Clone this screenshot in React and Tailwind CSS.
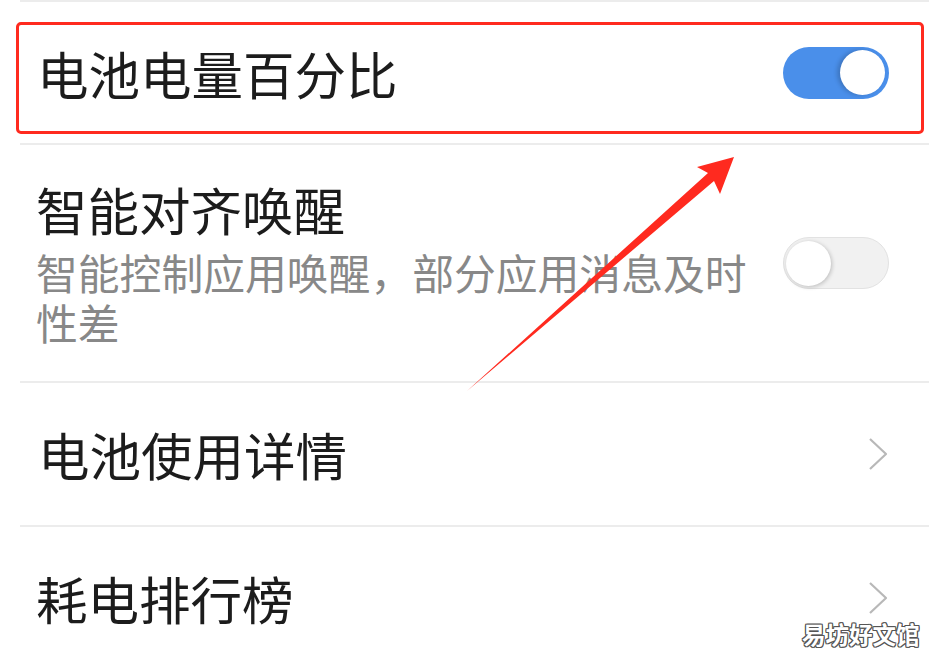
import React from 'react'

function Divider() {
  return <div className="mx-5 h-[2px] bg-[#ececec]" />
}

function Toggle({ on }) {
  if (on) {
    return (
      <div className="flex h-[52px] w-[106px] items-center justify-end rounded-full bg-[#4a8fea] pr-[4px]">
        <div className="h-[45px] w-[45px] rounded-full bg-white shadow-[-3px_0_4px_rgba(0,0,0,0.18)]" />
      </div>
    )
  }
  return (
    <div className="flex h-[52px] w-[106px] items-center justify-start rounded-full border border-[#e2e2e2] bg-[#f1f1f1] pl-[2px]">
      <div className="h-[45px] w-[45px] rounded-full bg-white shadow-[1px_1px_4px_rgba(0,0,0,0.22)]" />
    </div>
  )
}

function Chevron() {
  return (
    <svg width="20" height="34" viewBox="0 0 20 34" fill="none">
      <polyline points="2,2 18,17 2,32" stroke="#b8b8b8" strokeWidth="2.2" strokeLinejoin="round" />
    </svg>
  )
}

export default function App() {
  return (
    <div className="relative h-[668px] w-[949px] overflow-hidden bg-white font-['Noto_Sans_CJK_SC',sans-serif]">
      <Divider />

      <div className="flex h-[141px] items-center justify-between pl-[37px] pr-[60px]">
        <span className="text-[51.5px] leading-[60px] text-[#1c1c1c]">电池电量百分比</span>
        <Toggle on />
      </div>
      <Divider />

      <div className="flex h-[236px] items-center justify-between pl-[36px] pr-[60px]">
        <div className="flex w-[725px] flex-col gap-[8px]">
          <span className="text-[51.5px] leading-[60px] text-[#1c1c1c]">智能对齐唤醒</span>
          <span className="text-[41.8px] leading-[50px] text-[#888888]">智能控制应用唤醒，部分应用消息及时性差</span>
        </div>
        <Toggle on={false} />
      </div>
      <Divider />

      <div className="flex h-[142px] items-center justify-between pl-[38px] pr-[61px]">
        <span className="text-[51.5px] leading-[60px] text-[#1c1c1c]">电池使用详情</span>
        <Chevron />
      </div>
      <Divider />

      <div className="flex h-[142px] items-center justify-between pl-[36px] pr-[61px]">
        <span className="text-[51.5px] leading-[60px] text-[#1c1c1c]">耗电排行榜</span>
        <Chevron />
      </div>

      {/* annotation: red frame */}
      <div className="pointer-events-none absolute left-[16px] top-[22px] h-[112px] w-[908px] rounded-[5px] border-[3.5px] border-[#ff2a1f]" />

      {/* annotation: arrow */}
      <svg className="pointer-events-none absolute left-0 top-0" width="949" height="668" viewBox="0 0 949 668">
        <polygon points="467,391 708,173 697,167 734,157 720,194 714,181" fill="#ff2a1f" />
      </svg>

      <span className="absolute left-[802px] top-[619px] text-[23.5px] font-bold leading-[30px] text-white [text-shadow:1px_0_0_#555,-1px_0_0_#555,0_1px_0_#555,0_-1px_0_#555,1px_1px_0_#555,-1px_-1px_0_#555,1px_-1px_0_#555,-1px_1px_0_#555]">
        易坊好文馆
      </span>
    </div>
  )
}
